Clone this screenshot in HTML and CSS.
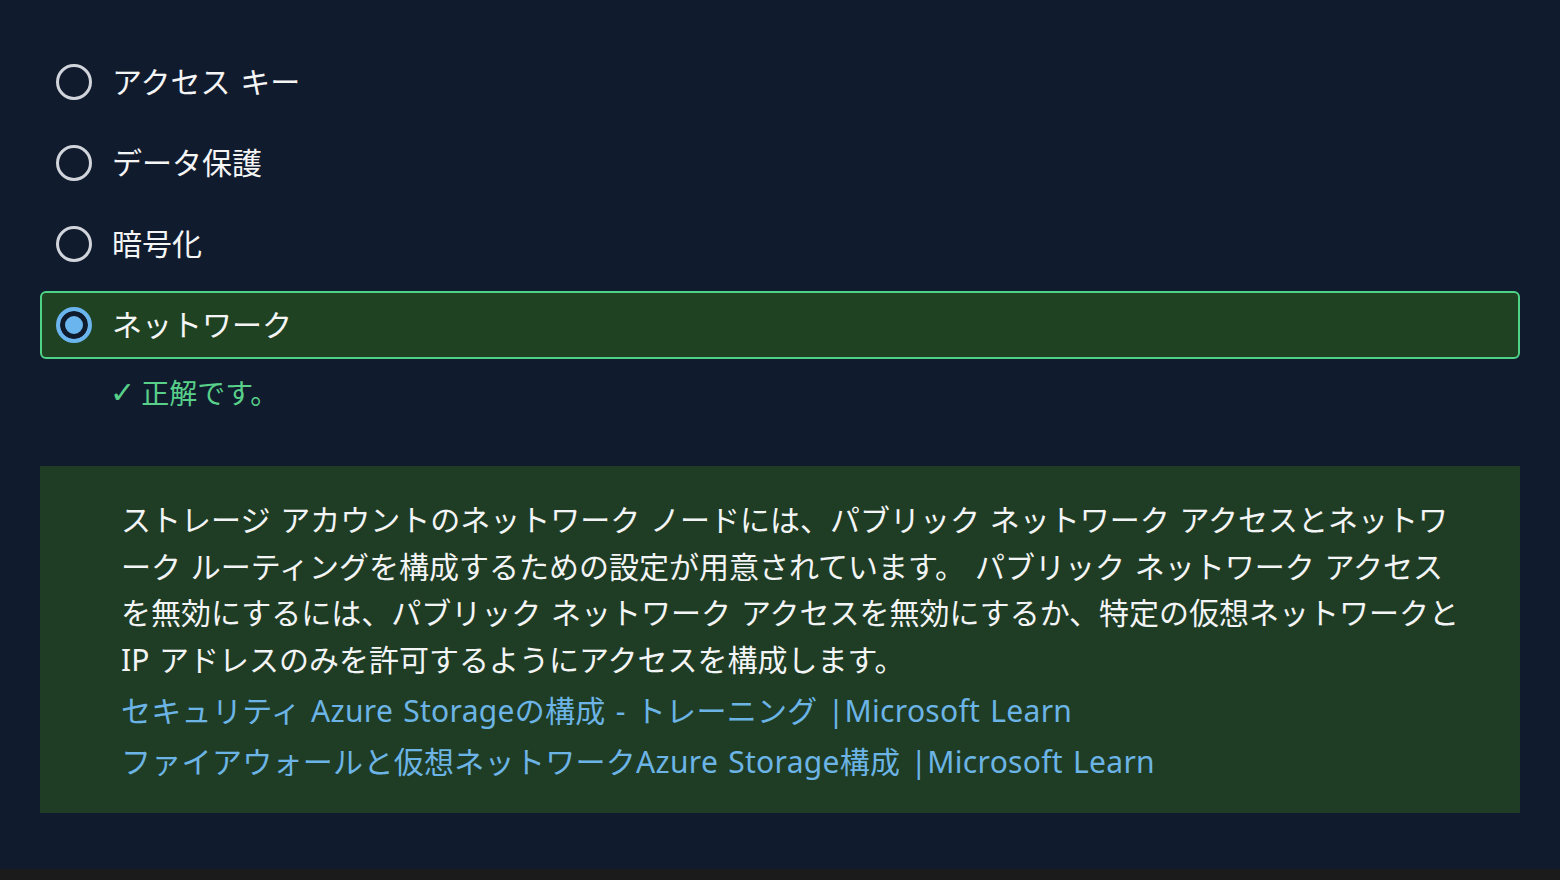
FILE: index.html
```html
<!DOCTYPE html>
<html lang="ja">
<head>
<meta charset="utf-8">
<title>Quiz</title>
<link rel="stylesheet" href="styles.css">
</head>
<body>
<div class="page">
  <div class="options">
    <div class="option"><span class="radio"></span><span class="label">アクセス キー</span></div>
    <div class="option"><span class="radio"></span><span class="label">データ保護</span></div>
    <div class="option"><span class="radio"></span><span class="label">暗号化</span></div>
    <div class="option selected"><span class="radio checked"></span><span class="label">ネットワーク</span></div>
  </div>
  <div class="feedback"><span class="check">✓</span>正解です。</div>
  <div class="explanation">
    <p class="exp-text">ストレージ アカウントのネットワーク ノードには、パブリック ネットワーク アクセスとネットワ<br>ーク ルーティングを構成するための設定が用意されています。 パブリック ネットワーク アクセス<br>を無効にするには、パブリック ネットワーク アクセスを無効にするか、特定の仮想ネットワークと<br>IP アドレスのみを許可するようにアクセスを構成します。</p>
    <a class="link first" href="#">セキュリティ Azure Storageの構成 - トレーニング |Microsoft Learn</a>
    <a class="link" href="#">ファイアウォールと仮想ネットワークAzure Storage構成 |Microsoft Learn</a>
  </div>
</div>
<div class="strip"></div>
</body>
</html>
```
FILE: styles.css
```css
html, body {
  margin: 0;
  padding: 0;
}
body {
  background: #101c2e;
  font-family: "Noto Sans", "Noto Sans CJK JP", sans-serif;
  color: #f3f4f6;
}
.page {
  height: 869px;
  box-sizing: border-box;
  padding: 48px 40px 0 40px;
  display: flex;
  flex-direction: column;
}
.options {
  display: flex;
  flex-direction: column;
  gap: 13px;
}
.option {
  height: 68px;
  box-sizing: border-box;
  border: 2px solid transparent;
  border-radius: 6px;
  padding: 0 14px;
  display: flex;
  align-items: center;
  gap: 20px;
}
.option.selected {
  background: #1f4223;
  border-color: #4fd286;
}
.radio {
  width: 36px;
  height: 36px;
  box-sizing: border-box;
  border: 3.5px solid #d1d5db;
  border-radius: 50%;
  flex: none;
}
.radio.checked {
  border: 4px solid #6bb5ee;
  background: #6bb5ee;
  box-shadow: inset 0 0 0 5px #0f1b2d;
}
.label {
  font-size: 30px;
  line-height: 40px;
  color: #f5f5f5;
  word-spacing: 2px;
}
.feedback {
  margin: 14px 0 0 70px;
  font-size: 28px;
  line-height: 40px;
  color: #58d08a;
  display: flex;
  align-items: center;
}
.check {
  font-size: 30px;
  margin-right: 6px;
  font-family: "DejaVu Sans", sans-serif;
}
.explanation {
  margin-top: 53px;
  background: #1f3d24;
  padding: 31px 40px 26px 81px;
  display: flex;
  flex-direction: column;
  align-items: flex-start;
}
.exp-text {
  margin: 0;
  font-size: 30px;
  line-height: 46.6px;
  color: #f3f4f6;
  white-space: nowrap;
  word-spacing: 2px;
}
.link {
  font-size: 30px;
  line-height: 51px;
  color: #6cb4e6;
  text-decoration: none;
  word-spacing: 2px;
  letter-spacing: 0.3px;
}
.link.first {
  margin-top: 2px;
}
.strip {
  height: 11px;
  background: #1b1b1b;
}
```
